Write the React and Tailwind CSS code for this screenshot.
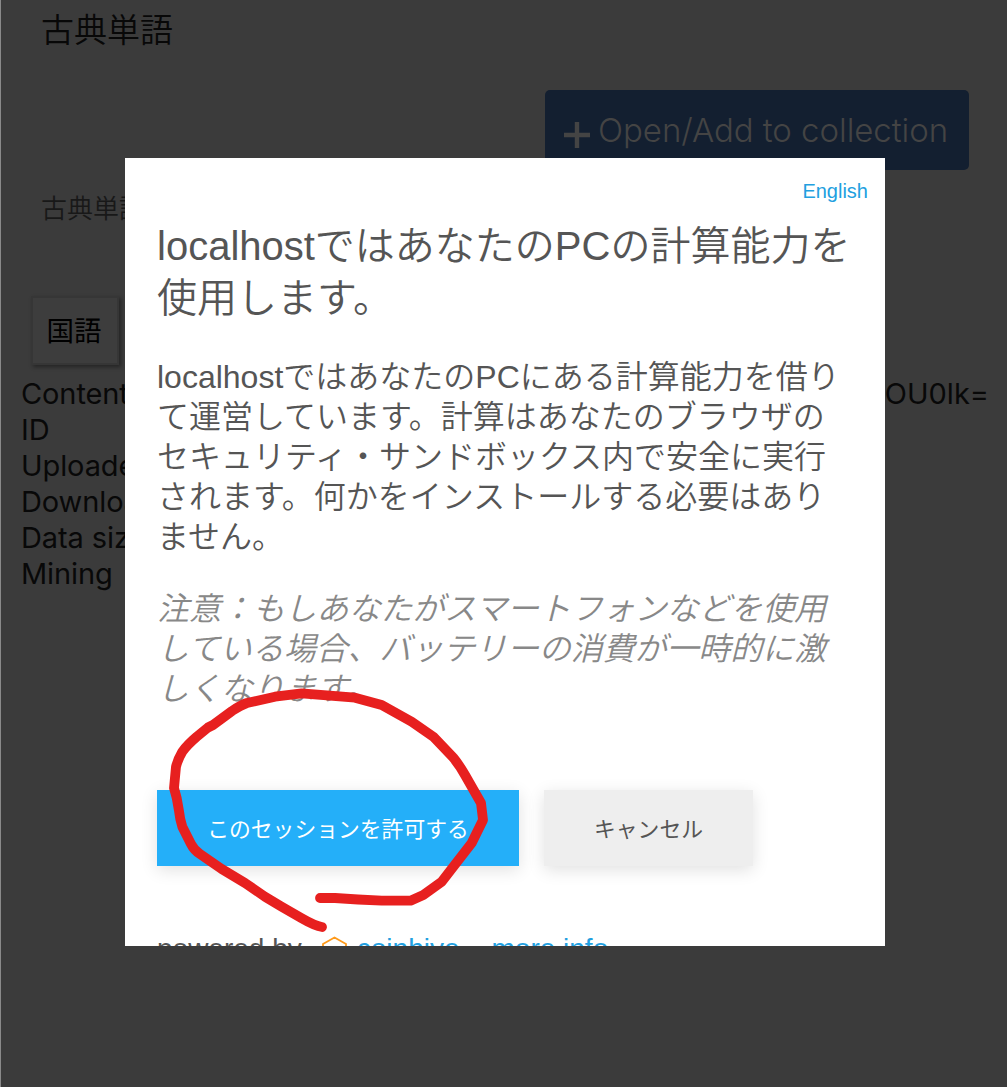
const heading = ["localhostではあなたのPCの計算能力を", "使用します。"];

const body = [
  "localhostではあなたのPCにある計算能力を借り",
  "て運営しています。計算はあなたのブラウザの",
  "セキュリティ・サンドボックス内で安全に実行",
  "されます。何かをインストールする必要はあり",
  "ません。",
];

const note = [
  "注意：もしあなたがスマートフォンなどを使用",
  "している場合、バッテリーの消費が一時的に激",
  "しくなります。",
];

const details = ["Content", "ID", "Uploader", "Download", "Data size", "Mining"];

function Lines({ items }) {
  return items.map((line) => (
    <span key={line} className="block whitespace-nowrap">
      {line}
    </span>
  ));
}

function ContentPage() {
  return (
    <div className="h-full border-l border-[#8a8a8a] bg-[#3b3b3b] font-['Inter','Noto_Sans_CJK_JP',sans-serif] text-[#080808]">
      <h1 className="h-[90px] pt-[10px] pl-[40px] text-[33px] leading-[40px] font-[350]">古典単語</h1>
      <div className="flex justify-end pr-[38px]">
        <button className="flex h-20 w-[424px] items-center rounded-[5px] bg-[#131f30] pl-[19px] text-[#444444]">
          <svg className="mt-[10px] mr-[8px] h-[26px] w-[26px]" viewBox="0 0 26 26" stroke="currentColor" strokeWidth="4.4">
            <path d="M13 0V26M0 13H26" />
          </svg>
          <span className="text-[33px] leading-10 font-[350] tracking-[-0.05px] whitespace-nowrap">Open/Add to collection</span>
        </button>
      </div>
      <p className="mt-[20px] pl-[40px] text-[26px] leading-[38px] font-[350] text-[#181818]">古典単語</p>
      <div className="mt-[68px] ml-[30px] flex h-[69px] w-[88px] items-center justify-center border-2 border-[#363636] bg-[#3d3d3d] pt-[2px] pr-[2px] text-[27.5px] text-black shadow-[2px_2px_4px_rgba(0,0,0,0.4)]">
        国語
      </div>
      <div className="mt-[11px] flex justify-between pr-[18px] pl-[20px] text-[29px] leading-9 tracking-[-0.1px]">
        <div>
          <Lines items={details} />
        </div>
        <span className="tracking-normal">OU0lk=</span>
      </div>
    </div>
  );
}

function ConsentDialog() {
  return (
    <div className="absolute top-[158px] left-[125px] h-[788px] w-[760px] overflow-hidden bg-white px-8 font-['Liberation_Sans','Noto_Sans_CJK_JP',sans-serif] text-[#555555]">
      <a className="-mr-[15px] block pt-[18px] text-right text-[20px] leading-[30px] text-[#229fe0]">English</a>
      <h2 className="mt-[14px] text-[40px] leading-[52px] font-[350]">
        <Lines items={heading} />
      </h2>
      <p className="mt-[33px] text-[32px] leading-10 font-[350]">
        <Lines items={body} />
      </p>
      <p className="mt-8 text-[32px] leading-10 font-[350] tracking-[-0.1px] text-[#888888] italic">
        <Lines items={note} />
      </p>
      <div className="mt-[81px] flex gap-[25px] text-[21.8px] font-normal">
        <button className="h-[76px] w-[362px] bg-[#24aff9] pt-[4px] text-white shadow-[0_4px_16px_rgba(0,0,0,0.12)]">
          このセッションを許可する
        </button>
        <button className="h-[76px] w-[209px] bg-[#eeeeee] pt-[4px] shadow-[0_4px_16px_rgba(0,0,0,0.12)]">キャンセル</button>
      </div>
      <div className="mt-[67px] flex text-[28px] leading-8 whitespace-nowrap">
        <span>powered by</span>
        <svg className="mt-[3px] mr-[10px] ml-5 h-7 w-[25px]" viewBox="0 0 25 28" fill="none" stroke="#ff9a1a" strokeWidth="1.8">
          <path d="M12.5 1.5L24 8V20L12.5 26.5L1 20V8Z" />
        </svg>
        <a className="text-[#229fe0]">coinhive</a>
        <a className="ml-8 text-[#229fe0]">more info</a>
      </div>
    </div>
  );
}

function Marker() {
  return (
    <svg
      className="pointer-events-none absolute top-[680px] left-[160px] h-[260px] w-[340px]"
      viewBox="160 680 340 260"
      fill="none"
      stroke="#e7201f"
      strokeWidth="9.8"
      strokeLinecap="round"
      strokeLinejoin="round"
    >
      <path d="M322 927Q315 926 301.7 918.3L281.7 906.7L265 896.7L245 883L221.7 869L200 854Q194 850 191 844L182.3 826.7Q180 820 179 811L176.7 798L174 788L176 766.7Q178 759 182.3 751.7Q187 745 196.7 736.7L208 727.5L213 725L232 711Q241 705 247 703L275 696.7L301.7 693.3L355 697.7L381.7 705L411.7 721.7L433.3 736.7L453.3 757.7Q460 766 465 775L481 803L483 820L471.7 843L453.3 866.7L441.7 881.7L423.3 895L410.5 900.7L381.7 900.7L358 899.5L335 898L320 898" />
    </svg>
  );
}

export default function App() {
  return (
    <div className="relative h-[1087px] w-[1007px] overflow-hidden">
      <ContentPage />
      <ConsentDialog />
      <Marker />
    </div>
  );
}
